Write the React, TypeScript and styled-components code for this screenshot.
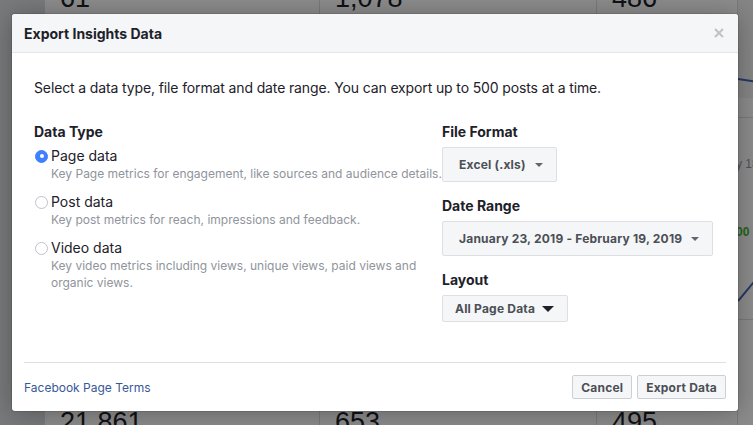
import styled, { createGlobalStyle } from "styled-components";

const GlobalStyle = createGlobalStyle`
  * { box-sizing: border-box; }
  body {
    margin: 0;
    font-family: Inter, "Liberation Sans", Arial, sans-serif;
    color: #1d2129;
  }
`;

const Page = styled.div`
  position: relative;
  width: 100vw;
  height: 100vh;
  overflow: hidden;
  display: flex;
  background: #dddfe2;
`;

const Sidebar = styled.div`
  width: 45px;
  flex-shrink: 0;
`;

const StatColumn = styled.div<{ $w: number }>`
  width: ${(p) => p.$w}px;
  flex-shrink: 0;
  background: #fff;
  border-right: 1px solid #dddfe2;
  display: flex;
  flex-direction: column;
  justify-content: space-between;
  padding-left: 15px;
`;

const StatNumber = styled.div<{ $top?: boolean }>`
  font-family: "Liberation Sans", Arial, sans-serif;
  font-size: 27px;
  line-height: 27px;
  color: #1d2129;
  margin: ${(p) => (p.$top ? "-15px 0 0" : "0 0 -11px")};
`;

const ChartPanel = styled.div`
  flex: 1;
  background: #fff;
  display: flex;
  flex-direction: column;
`;

const ChartArea = styled.div<{ $h: number }>`
  height: ${(p) => p.$h}px;
  background: #f2f3f5;
  display: flex;
  align-items: flex-end;
`;

const ChartRule = styled.div<{ $h: number }>`
  height: ${(p) => p.$h}px;
  border-bottom: 1px solid #dddfe2;
`;

const ChartNote = styled.div<{ $green?: boolean; $gap: number }>`
  font-family: "Liberation Sans", Arial, sans-serif;
  font-size: 12px;
  line-height: 14px;
  font-weight: ${(p) => (p.$green ? 700 : 400)};
  color: ${(p) => (p.$green ? "#42b72a" : "#90949c")};
  margin: ${(p) => p.$gap}px 0 0 -2px;
  white-space: nowrap;
`;

const Overlay = styled.div`
  position: absolute;
  inset: 0;
  background: rgba(0, 0, 0, 0.45);
`;

const Modal = styled.div`
  position: absolute;
  top: 14px;
  left: 12px;
  width: 726px;
  background: #fff;
  border-radius: 3px;
  box-shadow: 0 2px 26px rgba(0, 0, 0, 0.3), 0 0 0 1px rgba(0, 0, 0, 0.1);
  overflow: hidden;
`;

const Header = styled.div`
  height: 39px;
  background: #f5f6f7;
  border-bottom: 1px solid #e5e5e5;
  display: flex;
  align-items: center;
  justify-content: space-between;
  padding: 0 13px 0 12px;
`;

const Title = styled.h3`
  margin: 0;
  font-size: 14px;
  font-weight: 700;
  color: #1d2129;
  line-height: 19px;
`;

const CloseButton = styled.button`
  border: 0;
  background: none;
  padding: 0;
  width: 12px;
  height: 12px;
  display: flex;
  align-items: center;
  justify-content: center;
  cursor: pointer;
`;

const Body = styled.div`
  padding: 26px 22px 40px;
`;

const Intro = styled.p`
  margin: 0;
  font-size: 14px;
  line-height: 18px;
  letter-spacing: -0.13px;
  color: #1d2129;
`;

const Columns = styled.div`
  display: flex;
  margin-top: 26px;
`;

const LeftColumn = styled.div`
  width: 408px;
  flex-shrink: 0;
`;

const RightColumn = styled.div`
  display: flex;
  flex-direction: column;
  align-items: flex-start;
`;

const SectionLabel = styled.div<{ $spaced?: boolean }>`
  font-size: 14px;
  font-weight: 700;
  line-height: 18px;
  color: #1d2129;
  margin-top: ${(p) => (p.$spaced ? "15px" : "0")};
  margin-bottom: 6px;
`;

const Option = styled.label`
  display: block;
  margin-bottom: 11px;
  cursor: pointer;
`;

const OptionRow = styled.div`
  display: flex;
  align-items: center;
  gap: 3px;
  margin-left: 1px;
`;

const Radio = styled.span<{ $checked?: boolean }>`
  width: 13px;
  height: 13px;
  border-radius: 50%;
  flex-shrink: 0;
  background: ${(p) => (p.$checked ? "#4080ff" : "#fff")};
  border: 1px solid ${(p) => (p.$checked ? "#4080ff" : "#bec2c9")};
  display: flex;
  align-items: center;
  justify-content: center;

  &::after {
    content: "";
    width: 4px;
    height: 4px;
    border-radius: 50%;
    background: #fff;
    display: ${(p) => (p.$checked ? "block" : "none")};
  }
`;

const OptionName = styled.span`
  font-size: 14px;
  line-height: 18px;
  color: #1d2129;
`;

const OptionDesc = styled.div`
  margin-left: 17px;
  font-size: 12px;
  line-height: 17px;
  color: #90949c;
`;

const Select = styled.button<{ $h: number; $pl: number; $dark?: boolean }>`
  height: ${(p) => p.$h}px;
  padding: 0 13px 0 ${(p) => p.$pl}px;
  border: 1px solid #dddfe2;
  border-radius: 2px;
  background: #f5f6f7;
  display: inline-flex;
  align-items: center;
  gap: ${(p) => (p.$dark ? "7px" : "9px")};
  font-family: inherit;
  font-size: 12px;
  font-weight: 700;
  letter-spacing: 0.2px;
  color: #4b4f56;
  cursor: pointer;
`;

const Caret = styled.span<{ $big?: boolean }>`
  width: 0;
  height: 0;
  border-left: ${(p) => (p.$big ? 6 : 4)}px solid transparent;
  border-right: ${(p) => (p.$big ? 6 : 4)}px solid transparent;
  border-top: ${(p) => (p.$big ? 6 : 4)}px solid ${(p) => (p.$big ? "#1d2129" : "#606770")};
`;

const Footer = styled.div`
  margin: 0 12px;
  border-top: 1px solid #dddfe2;
  padding: 12px 0;
  display: flex;
  align-items: center;
  justify-content: space-between;
`;

const TermsLink = styled.a`
  font-size: 12px;
  color: #385898;
  text-decoration: none;
  cursor: pointer;
`;

const ButtonRow = styled.div`
  display: flex;
  gap: 5px;
`;

const Button = styled.button`
  height: 24px;
  padding: 0 8px;
  border: 1px solid #ccd0d5;
  border-radius: 2px;
  background: #f5f6f7;
  font-family: inherit;
  font-size: 12px;
  font-weight: 700;
  letter-spacing: 0.2px;
  color: #4b4f56;
  cursor: pointer;
`;

const stats = [
  { w: 275, top: "61", bottom: "21,861" },
  { w: 277, top: "1,078", bottom: "653" },
  { w: 141, top: "486", bottom: "495" },
];

const dataTypes = [
  {
    name: "Page data",
    desc: "Key Page metrics for engagement, like sources and audience details.",
    checked: true,
  },
  {
    name: "Post data",
    desc: "Key post metrics for reach, impressions and feedback.",
  },
  {
    name: "Video data",
    desc: "Key video metrics including views, unique views, paid views and organic views.",
  },
];

function App() {
  return (
    <>
      <GlobalStyle />
      <Page>
        <Sidebar />
        {stats.map((s) => (
          <StatColumn key={s.top} $w={s.w}>
            <StatNumber $top>{s.top}</StatNumber>
            <StatNumber>{s.bottom}</StatNumber>
          </StatColumn>
        ))}
        <ChartPanel>
          <ChartArea $h={98}>
            <svg width="20" height="30" viewBox="0 0 20 30">
              <path d="M0 11 L20 14" stroke="#4267b2" strokeWidth="2" fill="none" />
            </svg>
          </ChartArea>
          <ChartRule $h={20} />
          <ChartNote $gap={39}>y 18</ChartNote>
          <ChartNote $green $gap={54}>00</ChartNote>
          <svg width="20" height="80" viewBox="0 0 20 80">
            <path d="M0 62 L20 38" stroke="#4267b2" strokeWidth="2" fill="none" />
          </svg>
          <ChartRule $h={1} />
        </ChartPanel>
        <Overlay />
        <Modal>
          <Header>
            <Title>Export Insights Data</Title>
            <CloseButton aria-label="Close">
              <svg width="10" height="10" viewBox="0 0 10 10">
                <path d="M1 1 L9 9 M9 1 L1 9" stroke="#bec2c9" strokeWidth="2" />
              </svg>
            </CloseButton>
          </Header>
          <Body>
            <Intro>
              Select a data type, file format and date range. You can export
              up to 500 posts at a time.
            </Intro>
            <Columns>
              <LeftColumn>
                <SectionLabel>Data Type</SectionLabel>
                {dataTypes.map((d) => (
                  <Option key={d.name}>
                    <OptionRow>
                      <Radio $checked={d.checked} />
                      <OptionName>{d.name}</OptionName>
                    </OptionRow>
                    <OptionDesc>{d.desc}</OptionDesc>
                  </Option>
                ))}
              </LeftColumn>
              <RightColumn>
                <SectionLabel>File Format</SectionLabel>
                <Select $h={35} $pl={16}>
                  Excel (.xls) <Caret />
                </Select>
                <SectionLabel $spaced>Date Range</SectionLabel>
                <Select $h={35} $pl={16}>
                  January 23, 2019 - February 19, 2019 <Caret />
                </Select>
                <SectionLabel $spaced>Layout</SectionLabel>
                <Select $h={27} $pl={12} $dark>
                  All Page Data <Caret $big />
                </Select>
              </RightColumn>
            </Columns>
          </Body>
          <Footer>
            <TermsLink>Facebook Page Terms</TermsLink>
            <ButtonRow>
              <Button>Cancel</Button>
              <Button>Export Data</Button>
            </ButtonRow>
          </Footer>
        </Modal>
      </Page>
    </>
  );
}

export default App;
